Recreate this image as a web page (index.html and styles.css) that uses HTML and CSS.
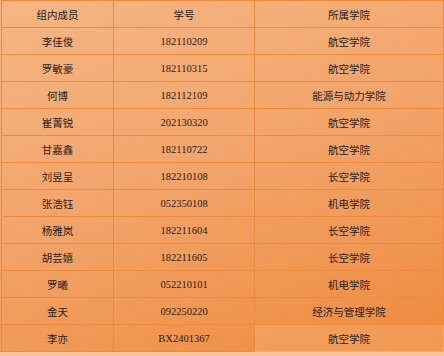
FILE: index.html
```html
<!DOCTYPE html>
<html lang="zh">
<head>
<meta charset="utf-8">
<link rel="stylesheet" href="styles.css">
</head>
<body>
<div class="sheet">
<table class="members">
<colgroup><col class="c1"><col class="c2"><col class="c3"></colgroup>
<tr><td>组内成员</td><td>学号</td><td>所属学院</td></tr>
<tr><td>李佳俊</td><td>182110209</td><td>航空学院</td></tr>
<tr><td>罗敏豪</td><td>182110315</td><td>航空学院</td></tr>
<tr><td>何博</td><td>182112109</td><td>能源与动力学院</td></tr>
<tr><td>崔菁锐</td><td>202130320</td><td>航空学院</td></tr>
<tr><td>甘嘉鑫</td><td>182110722</td><td>航空学院</td></tr>
<tr><td>刘昱呈</td><td>182210108</td><td>长空学院</td></tr>
<tr><td>张浩钰</td><td>052350108</td><td>机电学院</td></tr>
<tr><td>杨雅岚</td><td>182211604</td><td>长空学院</td></tr>
<tr><td>胡芸嬉</td><td>182211605</td><td>长空学院</td></tr>
<tr><td>罗曦</td><td>052210101</td><td>机电学院</td></tr>
<tr><td>金天</td><td>092250220</td><td>经济与管理学院</td></tr>
<tr class="last"><td>李亦</td><td>BX2401367</td><td class="light">航空学院</td></tr>
</table>
</div>
</body>
</html>
```
FILE: styles.css
```css
html, body {
  margin: 0;
  padding: 0;
}
body {
  width: 444px;
  height: 356px;
  overflow: hidden;
  background: #f6c49c;
}
.sheet {
  width: 444px;
  height: 352px;
  padding-left: 1px;
  box-sizing: border-box;
  background: linear-gradient(160deg, #f6b684 0%, #f2a369 50%, #ee8a3c 100%);
}
.members {
  border-collapse: collapse;
  width: 442px;
  table-layout: fixed;
  font-family: "Liberation Serif", "Noto Sans CJK SC", serif;
  font-size: 10.5px;
  color: #2b2018;
}
.c1 { width: 112px; }
.c2 { width: 141px; }
.c3 { width: 189px; }
.members td {
  height: 26px;
  padding: 0;
  text-align: center;
  vertical-align: middle;
  border: 1px solid #ef8a3c;
}
.members .light {
  background: rgba(255, 205, 160, 0.22);
  border-color: #f3a874;
}
```
